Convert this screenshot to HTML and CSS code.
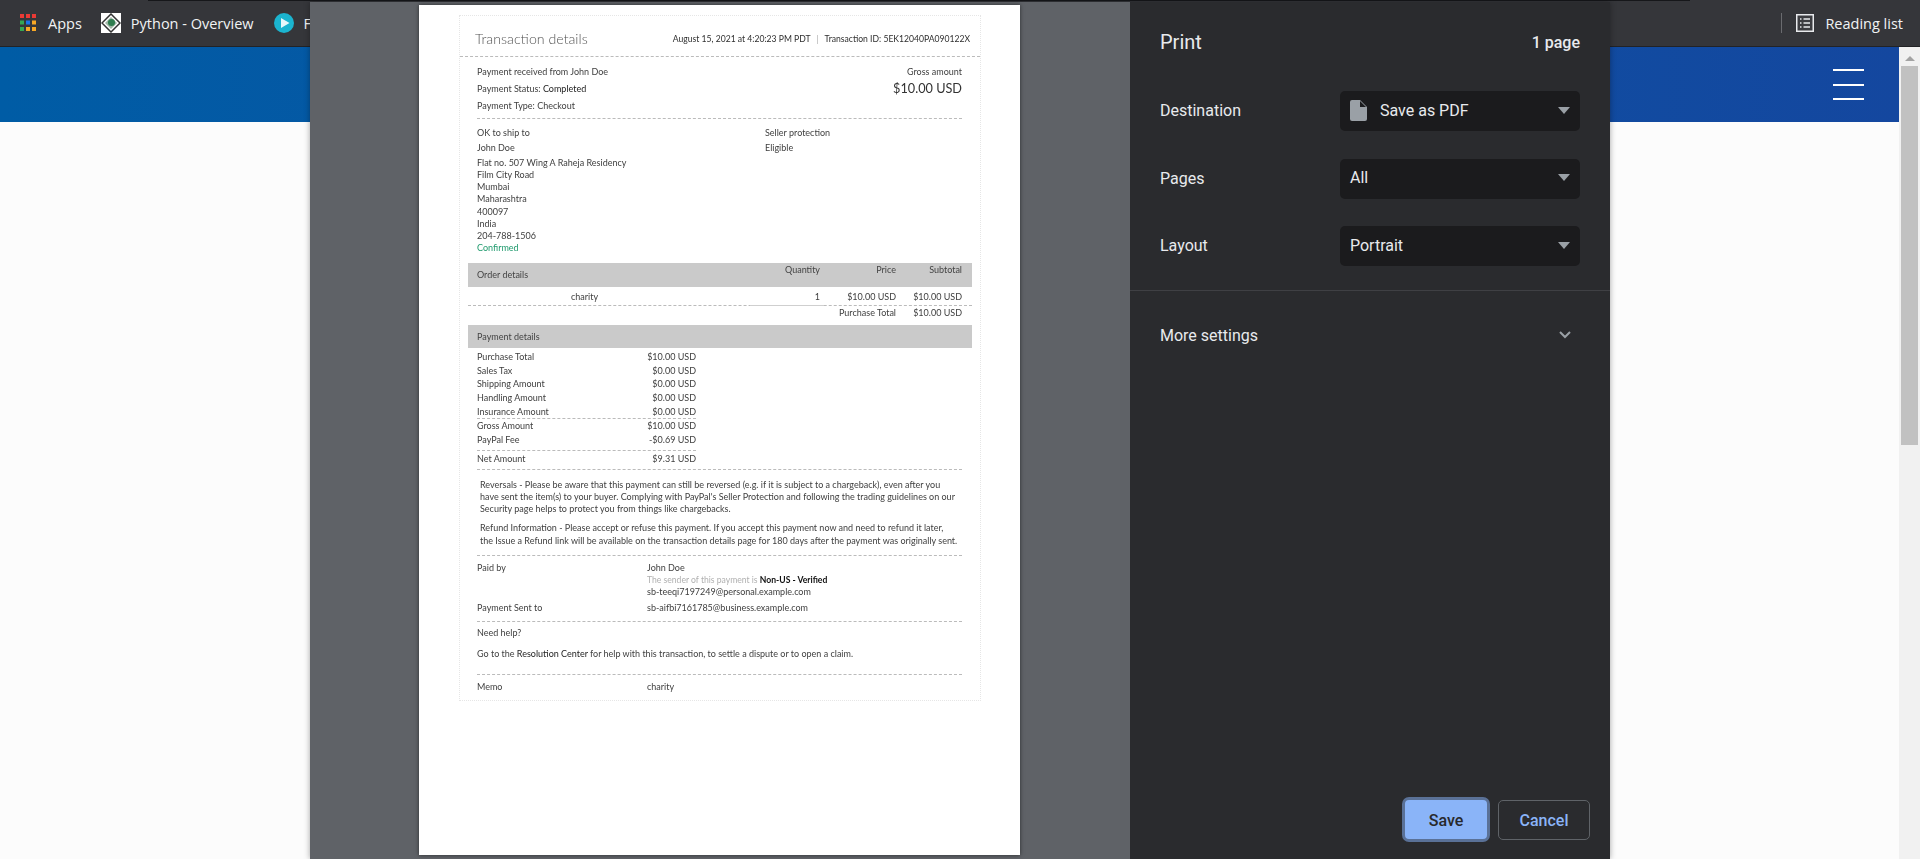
FILE: index.html
```html
<!DOCTYPE html>
<html lang="en">
<head>
    <meta charset="UTF-8">
    <title>Print</title>
    <link rel="stylesheet" href="styles.css">
</head>
<body>
    <div class="top-line"></div>
    <div class="bookmarks">
        <div class="bookmark apps">
            <svg width="16" height="18" viewBox="0 0 16 18">
                <rect x="0" y="0" width="4" height="4" fill="#ea3a35"/><rect x="6" y="0" width="4" height="4" fill="#ea3a35"/><rect x="12" y="0" width="4" height="4" fill="#ea3a35"/>
                <rect x="0" y="6.500" width="4" height="4" fill="#34a853"/><rect x="6" y="6.500" width="4" height="4" fill="#1a73e8"/><rect x="12" y="6.500" width="4" height="4" fill="#f9a825"/>
                <rect x="0" y="13" width="4" height="4" fill="#34a853"/><rect x="6" y="13" width="4" height="4" fill="#f9a825"/><rect x="12" y="13" width="4" height="4" fill="#f9a825"/>
            </svg>
            <span>Apps</span>
        </div>
        <div class="bookmark python">
            <svg width="20" height="20" viewBox="0 0 20 20">
                <rect width="20" height="20" fill="#fff"/>
                <path d="M10 1 19 10 10 19 1 10Z" fill="#fff" stroke="#333" stroke-width="1.500"/>
                <path d="M10 4 16 10 10 16 4 10Z" fill="#9fb5a5"/>
                <circle cx="10.500" cy="9.500" r="3.500" fill="#2f7d4f"/>
            </svg>
            <span>Python - Overview</span>
        </div>
        <div class="bookmark">
            <svg width="20" height="20" viewBox="0 0 20 20">
                <circle cx="10" cy="10" r="10" fill="#1bb4cf"/>
                <path d="M7 5 15.500 10 7 15Z" fill="#e8f7fa"/>
            </svg>
            <span>F</span>
        </div>
        <div class="bookmark reading">
            <svg width="18" height="18" viewBox="0 0 18 18">
                <rect x="0.750" y="0.750" width="16.500" height="16.500" fill="#3c3d41" stroke="#e8eaed" stroke-width="1.500"/>
                <path d="M4 5H5.500M7.500 5H14M4 9H5.500M7.500 9H14M4 13H5.500M7.500 13H14" stroke="#e8eaed" stroke-width="1.500"/>
            </svg>
            <span>Reading list</span>
        </div>
    </div>

    <div class="site">
        <div class="site-page">
            <div class="band">
                <div class="burger"><i></i><i></i><i></i></div>
            </div>
        </div>
        <div class="scrollbar">
            <div class="scroll-arrow"></div>
            <div class="scroll-thumb"></div>
        </div>
    </div>

    <div class="dialog">
        <div class="preview">
            <div class="paper">
                <div class="receipt">
                    <div class="receipt-head">
                        <h1>Transaction details</h1>
                        <div class="receipt-meta">August 15, 2021 at 4:20:23 PM PDT <span class="pipe">|</span> Transaction ID: 5EK12040PA090122X</div>
                    </div>

                    <div class="sec summary dotted">
                        <div>
                            <p>Payment received from John Doe</p>
                            <p>Payment Status: <span class="strong">Completed</span></p>
                            <p>Payment Type: Checkout</p>
                        </div>
                        <div class="gross">
                            <p>Gross amount</p>
                            <p class="gross-value">$10.00 USD</p>
                        </div>
                    </div>

                    <div class="sec ship">
                        <div class="ship-col">
                            <p>OK to ship to</p>
                            <p class="gap">John Doe</p>
                            <p class="gap">Flat no. 507 Wing A Raheja Residency</p>
                            <p>Film City Road</p>
                            <p>Mumbai</p>
                            <p>Maharashtra</p>
                            <p>400097</p>
                            <p>India</p>
                            <p>204-788-1506</p>
                            <p class="confirmed">Confirmed</p>
                        </div>
                        <div class="protect-col">
                            <p>Seller protection</p>
                            <p class="gap">Eligible</p>
                        </div>
                    </div>

                    <div class="grey-bar order-bar">
                        <span class="bar-title">Order details</span>
                        <span class="num">Quantity</span>
                        <span class="num">Price</span>
                        <span class="num">Subtotal</span>
                    </div>
                    <div class="order-row order-item">
                        <span class="item-name">charity</span>
                        <span class="num qty">1</span>
                        <span class="num">$10.00 USD</span>
                        <span class="num">$10.00 USD</span>
                    </div>
                    <div class="order-row order-total">
                        <span></span>
                        <span></span>
                        <span class="num">Purchase Total</span>
                        <span class="num">$10.00 USD</span>
                    </div>

                    <div class="grey-bar pay-bar">Payment details</div>
                    <div class="sec">
                        <div class="amounts">
                            <div class="amount"><span>Purchase Total</span><span>$10.00 USD</span></div>
                            <div class="amount"><span>Sales Tax</span><span>$0.00 USD</span></div>
                            <div class="amount"><span>Shipping Amount</span><span>$0.00 USD</span></div>
                            <div class="amount"><span>Handling Amount</span><span>$0.00 USD</span></div>
                            <div class="amount amount-end"><span>Insurance Amount</span><span>$0.00 USD</span></div>
                            <div class="amount"><span>Gross Amount</span><span>$10.00 USD</span></div>
                            <div class="amount amount-end fee"><span>PayPal Fee</span><span>-$0.69 USD</span></div>
                            <div class="amount net"><span>Net Amount</span><span>$9.31 USD</span></div>
                        </div>
                    </div>

                    <div class="sec notes dotted dotted-top">
                        <p>Reversals - Please be aware that this payment can still be reversed (e.g. if it is subject to a chargeback), even after you<br>have sent the item(s) to your buyer. Complying with PayPal's Seller Protection and following the trading guidelines on our<br>Security page helps to protect you from things like chargebacks.</p>
                        <p class="note-gap">Refund Information - Please accept or refuse this payment. If you accept this payment now and need to refund it later,<br>the Issue a Refund link will be available on the transaction details page for 180 days after the payment was originally sent.</p>
                    </div>

                    <div class="sec parties dotted">
                        <p>Paid by</p>
                        <div>
                            <p>John Doe</p>
                            <p class="sender">The sender of this payment is <b>Non-US - Verified</b></p>
                            <p>sb-teeqi7197249@personal.example.com</p>
                        </div>
                        <p class="party-gap">Payment Sent to</p>
                        <p class="party-gap">sb-aifbi7161785@business.example.com</p>
                    </div>

                    <div class="sec help dotted">
                        <p>Need help?</p>
                        <p class="help-line">Go to the <span class="strong">Resolution Center</span> for help with this transaction, to settle a dispute or to open a claim.</p>
                    </div>

                    <div class="sec parties memo">
                        <p>Memo</p>
                        <p>charity</p>
                    </div>
                </div>
            </div>
        </div>

        <div class="sidebar">
            <div class="side-head">
                <h2>Print</h2>
                <span class="page-count">1 page</span>
            </div>
            <div class="settings">
                <div class="setting">
                    <label>Destination</label>
                    <div class="select">
                        <svg class="doc" width="17" height="21" viewBox="0 0 17 21"><path d="M2 0H10L17 7V19a2 2 0 0 1-2 2H2a2 2 0 0 1-2-2V2a2 2 0 0 1 2-2Z" fill="#9aa0a6"/><path d="M10 1V7H16Z" fill="#1b1b1d"/></svg>
                        <span>Save as PDF</span>
                        <i class="caret"></i>
                    </div>
                </div>
                <div class="setting">
                    <label>Pages</label>
                    <div class="select"><span>All</span><i class="caret"></i></div>
                </div>
                <div class="setting">
                    <label>Layout</label>
                    <div class="select"><span>Portrait</span><i class="caret"></i></div>
                </div>
            </div>
            <div class="more">
                <span>More settings</span>
                <svg width="12" height="8" viewBox="0 0 12 8"><path d="M1 1 6 6 11 1" fill="none" stroke="#9aa0a6" stroke-width="2"/></svg>
            </div>
            <div class="actions">
                <button class="save">Save</button>
                <button class="cancel">Cancel</button>
            </div>
        </div>
    </div>
</body>
</html>
```

FILE: styles.css
```css
* {
    box-sizing: border-box;
}
html, body {
    margin: 0;
    height: 100%;
}
body {
    display: flex;
    flex-direction: column;
    height: 859px;
    overflow: hidden;
    background-color: #fff;
    font-family: "Noto Sans", sans-serif;
}
p, h1, h2 {
    margin: 0;
    font-weight: normal;
}

/* browser bookmarks */
.top-line {
    position: absolute;
    top: 0;
    left: 148px;
    width: 1542px;
    height: 1px;
    background-color: #16171a;
}
.bookmarks {
    display: flex;
    align-items: center;
    height: 47px;
    padding-left: 20px;
    background-color: #35363a;
    border-bottom: 1px solid #222326;
    color: #f1f3f4;
    font-family: "Open Sans", sans-serif;
    font-size: 14.500px;
}
.bookmark {
    display: flex;
    align-items: center;
    gap: 10px;
}
.apps {
    gap: 12px;
    margin-right: 19px;
}
.python {
    margin-right: 20px;
}
.reading {
    margin-left: auto;
    margin-right: 17px;
    padding-left: 14px;
    height: 20px;
    gap: 11px;
    border-left: 1px solid #6a6b6f;
}

/* page behind the dialog */
.site {
    flex: 1;
    display: flex;
    min-height: 0;
}
.site-page {
    flex: 1;
    background-color: #fcfcfc;
}
.band {
    display: flex;
    align-items: flex-start;
    justify-content: flex-end;
    height: 75px;
    padding: 22px 35px 0 0;
    background-image: linear-gradient(90deg, #005ca5 0%, #0b53a3 50%, #14479f 100%);
}
.burger {
    display: flex;
    flex-direction: column;
    gap: 12.500px;
    width: 31px;
}
.burger i {
    display: block;
    height: 2px;
    background-color: #fff;
}
.scrollbar {
    width: 21px;
    padding: 0 2px;
    background-color: #f1f1f1;
}
.scroll-arrow {
    width: 0;
    margin: 9px auto 5px;
    border-left: 5px solid transparent;
    border-right: 5px solid transparent;
    border-bottom: 5px solid #a3a3a3;
}
.scroll-thumb {
    height: 379px;
    background-color: #c1c1c1;
}

/* print dialog */
.dialog {
    position: absolute;
    top: 2px;
    left: 310px;
    display: flex;
    width: 1300px;
    height: 857px;
    box-shadow: 0 0 6px rgba(0, 0, 0, 0.35);
}
.preview {
    width: 820px;
    padding: 3px 0 0 109px;
    background-color: #5f6267;
}
.paper {
    width: 601px;
    height: 850px;
    padding: 10px 0 0 40px;
    background-color: #fff;
    box-shadow: 0 0 4px rgba(0, 0, 0, 0.55);
}

/* receipt on the paper */
.receipt {
    width: 522px;
    height: 686px;
    border: 1px dotted #e6e6e6;
    color: #404040;
    font-family: Lato, sans-serif;
    font-size: 9px;
    line-height: 12.100px;
    filter: blur(0.3px);
}
.receipt-head {
    display: flex;
    align-items: center;
    justify-content: space-between;
    height: 41px;
    padding: 6px 10px 0 15px;
    border-bottom: 1px dashed #bbb;
}
.receipt-head h1 {
    color: #555;
    font-size: 14.200px;
    font-weight: 300;
}
.receipt-meta {
    color: #2e2e2e;
    font-size: 8.600px;
}
.pipe {
    margin: 0 4px;
    color: #aaa;
}
.sec {
    margin: 0 18px 0 17px;
}
.dotted {
    border-bottom: 1px dashed #bbb;
}
.dotted-top {
    border-top: 1px dashed #bbb;
}
.strong {
    color: #1c1c1c;
}
.summary {
    display: flex;
    justify-content: space-between;
    height: 62px;
    padding-top: 6px;
}
.summary p {
    height: 17px;
    line-height: 17px;
}
.gross {
    text-align: right;
}
.summary .gross-value {
    color: #333;
    font-size: 12.700px;
}
.ship {
    display: flex;
    height: 144px;
    padding-top: 8px;
}
.ship-col {
    width: 288px;
}
.gap {
    margin-top: 3px;
}
.confirmed {
    color: #1f9a6d;
}
.grey-bar {
    margin: 0 8px;
    background-color: #cacaca;
    color: #444;
}
.order-bar, .order-row {
    display: grid;
    grid-template-columns: 283px 60px 76px 66px;
    margin: 0 8px;
    padding: 0 10px 0 9px;
}
.order-bar {
    height: 24px;
    padding-top: 1px;
}
.bar-title {
    padding-top: 5px;
}
.num {
    text-align: right;
}
.order-item {
    height: 19px;
    padding-top: 4px;
    border-bottom: 1px dashed #bbb;
}
.item-name {
    padding-left: 94px;
}
.qty {
    margin: 0 -4px -1px -10px;
    padding-right: 4px;
    border-bottom: 1px solid #cfcfcf;
}
.order-total {
    height: 19px;
    padding-top: 1px;
}
.pay-bar {
    height: 23px;
    padding: 6px 0 0 9px;
}
.amounts {
    width: 219px;
    padding-top: 2px;
}
.amount {
    display: flex;
    justify-content: space-between;
    height: 13.700px;
    line-height: 13.700px;
}
.amount-end {
    height: 14.700px;
    border-bottom: 1px dashed #bbb;
}
.fee {
    height: 18px;
}
.net {
    height: 18px;
    padding-top: 1px;
}
.notes {
    padding: 9px 0 8px 3px;
}
.note-gap {
    margin-top: 7px;
}
.parties {
    display: grid;
    grid-template-columns: 170px 1fr;
    padding: 6px 0 7px;
}
.party-gap {
    margin-top: 4px;
}
.sender {
    color: #b0b0b0;
    font-size: 8.600px;
}
.sender b {
    color: #111;
}
.help {
    padding: 5px 0 14px;
}
.help-line {
    margin-top: 9px;
}
.memo {
    padding-top: 6px;
}

/* dialog controls */
.sidebar {
    display: flex;
    flex-direction: column;
    width: 480px;
    background-color: #2a2b2e;
    color: #e8eaed;
    font-family: Roboto, sans-serif;
    font-size: 16px;
}
.side-head {
    display: flex;
    align-items: center;
    justify-content: space-between;
    height: 80px;
    padding: 0 30px;
}
.side-head h2 {
    font-size: 20px;
}
.page-count {
    font-weight: 500;
}
.settings {
    display: flex;
    flex-direction: column;
    gap: 27.500px;
    padding: 9px 30px 24px;
    border-bottom: 1px solid #3f4044;
}
.setting {
    display: flex;
    align-items: center;
    justify-content: space-between;
}
.setting label {
    padding-bottom: 1px;
}
.select {
    display: flex;
    align-items: center;
    width: 240px;
    height: 40px;
    padding: 0 10px 2px;
    border-radius: 5px;
    background-color: #1b1b1d;
}
.doc {
    margin-right: 13px;
}
.caret {
    margin-left: auto;
    border-left: 6px solid transparent;
    border-right: 6px solid transparent;
    border-top: 7px solid #9aa0a6;
}
.more {
    display: flex;
    align-items: center;
    justify-content: space-between;
    height: 90px;
    padding: 0 39px 2px 30px;
}
.actions {
    display: flex;
    align-items: center;
    justify-content: flex-end;
    gap: 8px;
    margin-top: auto;
    padding: 0 20px 17px 0;
}
button {
    padding-top: 2px;
    border-radius: 5px;
    font-family: Roboto, sans-serif;
    font-size: 16px;
    font-weight: 500;
}
.save {
    width: 88px;
    height: 45px;
    border: 3px solid #5a7197;
    border-radius: 7px;
    background-color: #8ab4f8;
    color: #28292c;
}
.cancel {
    width: 92px;
    height: 40px;
    border: 1px solid #5f6368;
    background-color: transparent;
    color: #8ab4f8;
}
```
